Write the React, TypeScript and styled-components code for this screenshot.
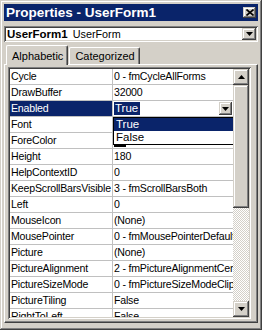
import React from "react";
import styled, { createGlobalStyle, css } from "styled-components";

const GlobalStyle = createGlobalStyle`
  html, body { margin: 0; padding: 0; background: #d4d0c8; }
  body { font-family: "Liberation Sans", Arial, sans-serif; }
  * { box-sizing: border-box; }
`;

const FACE = "#d4d0c8";
const NAVY = "#0a246a";

const raised = css`
  box-shadow: inset -1px -1px #404040, inset 1px 1px ${FACE},
    inset -2px -2px #808080, inset 2px 2px #ffffff;
`;

const Window = styled.div`
  width: 262px;
  height: 330px;
  background: ${FACE};
  padding: 4px 4px 7px 4px;
  display: flex;
  flex-direction: column;
  overflow: hidden;
  ${raised};
`;

const TitleBar = styled.div`
  flex-shrink: 0;
  height: 17px;
  background: ${NAVY};
  display: flex;
  align-items: center;
  justify-content: space-between;
  padding: 0 2px 0 2px;
`;

const TitleText = styled.span`
  color: #fff;
  font-weight: bold;
  font-size: 13.5px;
  line-height: 17px;
`;

const CloseButton = styled.div`
  width: 13px;
  height: 11px;
  background: ${FACE};
  ${raised};
  display: flex;
  align-items: center;
  justify-content: center;
`;

const ObjectCombo = styled.div`
  flex-shrink: 0;
  margin-top: 5px;
  height: 16px;
  background: #fff;
  display: flex;
  align-items: center;
  box-shadow: inset 1px 1px #808080, inset -1px -1px #ffffff,
    inset 2px 2px #404040, inset -2px -2px ${FACE};
  padding: 2px 2px 2px 3px;
`;

const ComboText = styled.span<{ $bold?: boolean }>`
  font-size: ${(p) => (p.$bold ? 11.5 : 10.8)}px;
  color: #000;
  font-weight: ${(p) => (p.$bold ? "bold" : "normal")};
  margin-right: 5px;
`;

const Spacer = styled.div`
  flex: 1;
`;

const ArrowButton = styled.div<{ $w: number; $h: number }>`
  width: ${(p) => p.$w}px;
  height: ${(p) => p.$h}px;
  background: ${FACE};
  ${raised};
  display: flex;
  align-items: center;
  justify-content: center;
  flex-shrink: 0;
`;

const TabStrip = styled.div`
  flex-shrink: 0;
  margin-top: 3px;
  height: 19px;
  display: flex;
  align-items: flex-end;
  padding-left: 2px;
`;

const Tab = styled.div<{ $active?: boolean }>`
  height: ${(p) => (p.$active ? 20 : 17)}px;
  padding: 0 4px 0 5px;
  font-size: 11px;
  color: #000;
  display: flex;
  align-items: center;
  background: ${FACE};
  border-top: 1px solid #fff;
  border-left: 1px solid #fff;
  border-right: 1px solid #404040;
  box-shadow: inset -1px 0 #808080;
  border-radius: 2px 2px 0 0;
  margin-bottom: ${(p) => (p.$active ? -1 : 0)}px;
  position: relative;
  z-index: ${(p) => (p.$active ? 2 : 1)};
  margin-right: 1px;
`;

const TabPanel = styled.div`
  flex: 1;
  min-height: 0;
  display: flex;
  border-top: 1px solid #fff;
  border-left: 1px solid #fff;
  border-right: 1px solid #404040;
  border-bottom: 1px solid #404040;
  box-shadow: inset -1px -1px #808080;
  padding: 2px 6px 3px 3px;
`;

const Grid = styled.div`
  flex: 1;
  min-height: 0;
  display: flex;
  padding: 2px;
  background: #fff;
  box-shadow: inset 1px 1px #808080, inset -1px -1px #ffffff,
    inset 2px 2px #404040, inset -2px -2px ${FACE};
  overflow: hidden;
`;

const RowList = styled.div`
  flex: 1;
  min-height: 0;
  position: relative;
  overflow: hidden;
`;

const Row = styled.div`
  height: 16px;
  display: grid;
  grid-template-columns: 103px 1fr;
  border-bottom: 1px solid #c0c0c0;
  font-size: 10.6px;
  letter-spacing: -0.2px;
  color: #000;
`;

const NameCell = styled.div<{ $selected?: boolean }>`
  border-right: 1px solid #c0c0c0;
  padding-left: 1px;
  line-height: 15px;
  white-space: nowrap;
  overflow: visible;
  background: ${(p) => (p.$selected ? NAVY : "transparent")};
  color: ${(p) => (p.$selected ? "#fff" : "#000")};
`;

const ValueCell = styled.div`
  padding-left: 1px;
  line-height: 15px;
  white-space: nowrap;
  overflow: hidden;
  display: flex;
  align-items: center;
  position: relative;
`;

const Highlight = styled.span`
  background: ${NAVY};
  color: #fff;
  padding: 0 2px 0 1px;
  line-height: 13px;
  font-size: 11.5px;
  letter-spacing: 0;
`;

const ColorSwatch = styled.span`
  display: inline-block;
  width: 12px;
  height: 10px;
  background: #000;
  margin-right: 3px;
  margin-top: 2px;
`;

const EditDrop = styled.div`
  position: absolute;
  right: 1px;
  top: 1px;
`;

const DropList = styled.div`
  position: absolute;
  left: 103px;
  top: 48px;
  width: 123px;
  height: 28px;
  background: #fff;
  border: 1px solid #000;
  z-index: 5;
  font-size: 11.5px;
`;

const DropItem = styled.div<{ $selected?: boolean }>`
  height: 13px;
  line-height: 13px;
  padding-left: 2px;
  background: ${(p) => (p.$selected ? NAVY : "#fff")};
  color: ${(p) => (p.$selected ? "#fff" : "#000")};
`;

const Scrollbar = styled.div`
  width: 16px;
  display: flex;
  flex-direction: column;
  flex-shrink: 0;
`;

const Thumb = styled.div`
  flex-shrink: 0;
  height: 123px;
  background: ${FACE};
  ${raised};
`;

const Track = styled.div`
  flex: 1;
  background-color: #ffffff;
  background-image: linear-gradient(45deg, ${FACE} 25%, transparent 25%, transparent 75%, ${FACE} 75%),
    linear-gradient(45deg, ${FACE} 25%, transparent 25%, transparent 75%, ${FACE} 75%);
  background-size: 2px 2px;
  background-position: 0 0, 1px 1px;
`;

const Arrow = ({ dir }: { dir: "up" | "down" }) => (
  <svg width="7" height="4" viewBox="0 0 7 4">
    {dir === "up" ? (
      <polygon points="3.5,0 7,4 0,4" fill="#000" />
    ) : (
      <polygon points="0,0 7,0 3.5,4" fill="#000" />
    )}
  </svg>
);

const CloseGlyph = () => (
  <svg width="8" height="7" viewBox="0 0 8 7">
    <path d="M0.5 0.5 L7.5 6.5 M7.5 0.5 L0.5 6.5" stroke="#000" strokeWidth="1.6" />
  </svg>
);

type Prop = { name: string; value: string };

const props: Prop[] = [
  { name: "Cycle", value: "0 - fmCycleAllForms" },
  { name: "DrawBuffer", value: "32000" },
  { name: "Enabled", value: "True" },
  { name: "Font", value: "Tahoma" },
  { name: "ForeColor", value: "&H80000012&" },
  { name: "Height", value: "180" },
  { name: "HelpContextID", value: "0" },
  { name: "KeepScrollBarsVisible", value: "3 - fmScrollBarsBoth" },
  { name: "Left", value: "0" },
  { name: "MouseIcon", value: "(None)" },
  { name: "MousePointer", value: "0 - fmMousePointerDefault" },
  { name: "Picture", value: "(None)" },
  { name: "PictureAlignment", value: "2 - fmPictureAlignmentCenter" },
  { name: "PictureSizeMode", value: "0 - fmPictureSizeModeClip" },
  { name: "PictureTiling", value: "False" },
  { name: "RightToLeft", value: "False" },
];

export default function App() {
  return (
    <>
      <GlobalStyle />
      <Window>
        <TitleBar>
          <TitleText>Properties - UserForm1</TitleText>
          <CloseButton>
            <CloseGlyph />
          </CloseButton>
        </TitleBar>
        <ObjectCombo>
          <ComboText $bold>UserForm1</ComboText>
          <ComboText>UserForm</ComboText>
          <Spacer />
          <ArrowButton $w={14} $h={12}>
            <Arrow dir="down" />
          </ArrowButton>
        </ObjectCombo>
        <TabStrip>
          <Tab $active>Alphabetic</Tab>
          <Tab>Categorized</Tab>
        </TabStrip>
        <TabPanel>
          <Grid>
            <RowList>
              {props.map((p) => {
                const selected = p.name === "Enabled";
                return (
                  <Row key={p.name}>
                    <NameCell $selected={selected}>{p.name}</NameCell>
                    <ValueCell>
                      {selected ? (
                        <>
                          <Highlight>{p.value}</Highlight>
                          <EditDrop>
                            <ArrowButton $w={13} $h={13}>
                              <Arrow dir="down" />
                            </ArrowButton>
                          </EditDrop>
                        </>
                      ) : p.name === "ForeColor" ? (
                        <>
                          <ColorSwatch />
                          {p.value}
                        </>
                      ) : (
                        p.value
                      )}
                    </ValueCell>
                  </Row>
                );
              })}
              <DropList>
                <DropItem $selected>True</DropItem>
                <DropItem>False</DropItem>
              </DropList>
            </RowList>
            <Scrollbar>
              <ArrowButton $w={16} $h={16}>
                <Arrow dir="up" />
              </ArrowButton>
              <Thumb />
              <Track />
              <ArrowButton $w={16} $h={16}>
                <Arrow dir="down" />
              </ArrowButton>
            </Scrollbar>
          </Grid>
        </TabPanel>
      </Window>
    </>
  );
}
